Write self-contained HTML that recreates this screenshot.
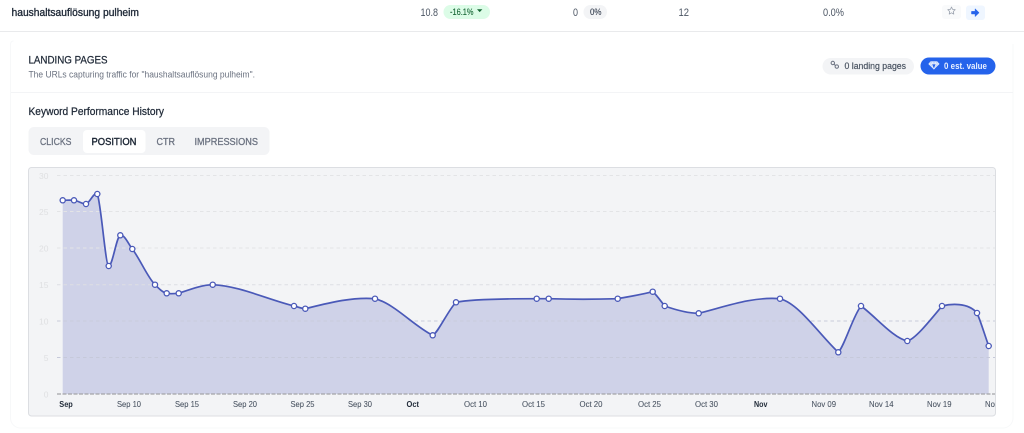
<!DOCTYPE html>
<html>
<head>
<meta charset="utf-8">
<style>
html,body{margin:0;padding:0;background:#fff;width:1024px;height:433px;overflow:hidden}
svg{display:block;filter:blur(.3px)}
text{font-family:"Liberation Sans",sans-serif}
.x{font-size:8.5px;fill:#4b5563;stroke:#4b5563;stroke-width:.08px}
.xb{font-size:8.5px;fill:#1f2937;font-weight:bold}
.y{font-size:8.5px;fill:#dfe0e2;text-anchor:end}
.t{font-size:10.5px;fill:#6b7280;stroke:#6b7280;stroke-width:.3px}
</style>
</head>
<body>
<svg width="1024" height="433" viewBox="0 0 1024 433" xmlns="http://www.w3.org/2000/svg">
<rect width="1024" height="433" fill="#fff"/>
<line x1="0" x2="1024" y1="31.5" y2="31.5" stroke="#e9eaec"/>

<text x="11.5" y="16" font-size="11" fill="#1f2937" stroke="#1f2937" stroke-width=".35" textLength="127.5" lengthAdjust="spacingAndGlyphs">haushaltsauflösung pulheim</text>
<text x="420.5" y="16" font-size="11" fill="#4b5563" textLength="17.5" lengthAdjust="spacingAndGlyphs">10.8</text>
<rect x="443.5" y="5" width="46.5" height="14" rx="7" fill="#dcfce7"/>
<text x="450" y="15.2" font-size="9" fill="#166534" stroke="#166534" stroke-width=".12" textLength="23.5" lengthAdjust="spacingAndGlyphs">-16.1%</text>
<path d="M477 9.2h5.4l-2.7 2.9z" fill="#166534"/>
<text x="573" y="16" font-size="11" fill="#4b5563" textLength="5" lengthAdjust="spacingAndGlyphs">0</text>
<rect x="583.5" y="5" width="23.5" height="14" rx="7" fill="#f3f4f6"/>
<text x="590" y="15.2" font-size="9" fill="#374151" stroke="#374151" stroke-width=".12" textLength="11.5" lengthAdjust="spacingAndGlyphs">0%</text>
<text x="678.5" y="16" font-size="11" fill="#4b5563" textLength="10.5" lengthAdjust="spacingAndGlyphs">12</text>
<text x="823" y="16" font-size="11" fill="#4b5563" textLength="21" lengthAdjust="spacingAndGlyphs">0.0%</text>

<rect x="942" y="5" width="19" height="14" rx="3" fill="#f9fafb"/>
<path d="M951.5 7l1.1 2.4 2.6.3-1.9 1.8.5 2.6-2.3-1.3-2.3 1.3.5-2.6-1.9-1.8 2.6-.3z" fill="none" stroke="#9ca3af" stroke-width=".8" stroke-linejoin="round"/>
<rect x="966" y="5.5" width="19" height="14.5" rx="3" fill="#eff6ff"/>
<path d="M971.5 11.4h3.6v-2.6l4 3.9-4 3.9v-2.6h-3.6z" fill="#2563eb" stroke="#2563eb" stroke-width=".5" stroke-linejoin="round"/>

<path d="M10.5 44a3 3 0 0 1 3-3M10.5 44V418a10 10 0 0 0 10 10H1003a10 10 0 0 0 10-10V44" fill="none" stroke="#f7f8f9"/>
<line x1="11" x2="1013" y1="92.5" y2="92.5" stroke="#f3f4f6"/>

<text x="28.5" y="63.7" font-size="11" fill="#1f2937" stroke="#1f2937" stroke-width=".25" textLength="79" lengthAdjust="spacingAndGlyphs">LANDING PAGES</text>
<text x="28.5" y="77.7" font-size="9" fill="#6b7280" textLength="226.5" lengthAdjust="spacingAndGlyphs">The URLs capturing traffic for "haushaltsauflösung pulheim".</text>

<rect x="822.5" y="58" width="91.5" height="16.5" rx="8.25" fill="#f3f4f6"/>
<g fill="none" stroke="#6b7280" stroke-width="1">
<circle cx="832.8" cy="63" r="1.7"/><circle cx="836.8" cy="66.6" r="1.7"/><path d="M834 64.2l1.6 1.4"/>
</g>
<text x="844.5" y="69.2" font-size="9.5" fill="#4b5563" stroke="#4b5563" stroke-width=".2" textLength="61.5" lengthAdjust="spacingAndGlyphs">0 landing pages</text>

<rect x="920.5" y="57.5" width="75" height="17" rx="8.5" fill="#2563eb"/>
<path d="M930.6 61.6h6.6l2 2.4-5.3 5.2-5.3-5.2zM928.6 64h10.6M931.8 64l2.1 5.2 2.1-5.2M931.8 64l1-2.4M936 64l-1-2.4" fill="#c3d6fb" stroke="#fff" stroke-width=".5" stroke-linejoin="round"/>
<text x="944" y="69.2" font-size="9.5" font-weight="bold" fill="#e8efff" textLength="43" lengthAdjust="spacingAndGlyphs">0 est. value</text>

<text x="28.5" y="115" font-size="11" fill="#1f2937" stroke="#1f2937" stroke-width=".25" textLength="135.5" lengthAdjust="spacingAndGlyphs">Keyword Performance History</text>

<rect x="28.5" y="127" width="241" height="28" rx="5.5" fill="#f3f4f6"/>
<rect x="83" y="130" width="62.5" height="23" rx="4" fill="#fff"/>
<text x="40" y="145" class="t" textLength="31.5" lengthAdjust="spacingAndGlyphs">CLICKS</text>
<text x="91.5" y="145" font-size="10.5" fill="#1f2937" stroke="#1f2937" stroke-width=".4" textLength="45" lengthAdjust="spacingAndGlyphs">POSITION</text>
<text x="156.5" y="145" class="t" textLength="18.5" lengthAdjust="spacingAndGlyphs">CTR</text>
<text x="194.5" y="145" class="t" textLength="63.5" lengthAdjust="spacingAndGlyphs">IMPRESSIONS</text>

<clipPath id="c"><rect x="29" y="168" width="966" height="248"/></clipPath>
<rect x="28.5" y="167.5" width="967" height="248.5" rx="3" fill="#f3f4f6" stroke="#dcdee2"/>

<path id="a" fill="#cfd2e8" d="M62.7 394V200.3C66.5 200.3 70.2 199.9 74 200.3C78 200.7 82 204 86 204C89.8 203 93.5 192.1 97.3 194C101.1 203.5 105.5 266 108.7 266C112.6 266 116.4 236.5 120.3 235.3C124.3 234.1 128.3 243.8 132.3 249C139.9 258.8 147.4 277.1 155 284.7C158.9 288.6 162.8 292.5 166.7 293.3C170.7 294.1 174.7 293.7 178.7 293.3C190 289.5 201.4 285 212.7 284.7C239.8 286 266.9 299.2 294 306C297.8 306.9 301.5 308.7 305.3 308.7C328.5 303 351.8 296.8 375 298.7C394.2 303.5 413.5 325.7 432.7 335.3C438 333 448.2 310 456 302.3C470 299.5 510 298.7 536.7 298.7C540.7 298.7 544.7 298.7 548.7 298.7C571.7 299.4 594.7 299.4 617.7 298.7C629.4 296.5 641 294.7 652.7 291.7C656.7 295 660.7 301 664.7 306C676 310 687.4 313.3 698.7 313.3C725.8 306.5 752 296.5 780 298.7C799.4 304 818.9 334 838.3 352.3C844.5 346 853 316 861 306C875 316 893 338 907.3 341C915 339 928 323 942 306C950 304 968 302 977 313C981 322 985 336 988.7 346V394Z"/>

<g stroke="#e3e4e6" stroke-width="1" stroke-dasharray="3.5 3">
<line x1="57" x2="995" y1="175.5" y2="175.5"/>
<line x1="57" x2="995" y1="211.5" y2="211.5"/>
<line x1="57" x2="995" y1="248" y2="248"/>
<line x1="57" x2="995" y1="284.7" y2="284.7" stroke="#dddee3"/>
<line x1="57" x2="995" y1="321" y2="321" stroke="#c9ccdb"/>
<line x1="57" x2="995" y1="357.5" y2="357.5" stroke="#c6c9da"/>
</g>
<line x1="57" x2="995" y1="394" y2="394" stroke="#a3a4a8" stroke-width="1.2" stroke-dasharray="4 1.5"/>

<path fill="none" stroke="#4a59b8" stroke-width="1.7" d="M62.7 200.3C66.5 200.3 70.2 199.9 74 200.3C78 200.7 82 204 86 204C89.8 203 93.5 192.1 97.3 194C101.1 203.5 105.5 266 108.7 266C112.6 266 116.4 236.5 120.3 235.3C124.3 234.1 128.3 243.8 132.3 249C139.9 258.8 147.4 277.1 155 284.7C158.9 288.6 162.8 292.5 166.7 293.3C170.7 294.1 174.7 293.7 178.7 293.3C190 289.5 201.4 285 212.7 284.7C239.8 286 266.9 299.2 294 306C297.8 306.9 301.5 308.7 305.3 308.7C328.5 303 351.8 296.8 375 298.7C394.2 303.5 413.5 325.7 432.7 335.3C438 333 448.2 310 456 302.3C470 299.5 510 298.7 536.7 298.7C540.7 298.7 544.7 298.7 548.7 298.7C571.7 299.4 594.7 299.4 617.7 298.7C629.4 296.5 641 294.7 652.7 291.7C656.7 295 660.7 301 664.7 306C676 310 687.4 313.3 698.7 313.3C725.8 306.5 752 296.5 780 298.7C799.4 304 818.9 334 838.3 352.3C844.5 346 853 316 861 306C875 316 893 338 907.3 341C915 339 928 323 942 306C950 304 968 302 977 313C981 322 985 336 988.7 346"/>

<g fill="#fff" stroke="#4a59b8" stroke-width="1.3">
<circle cx="62.7" cy="200.3" r="2.6"/><circle cx="74" cy="200.3" r="2.6"/><circle cx="86" cy="204" r="2.6"/><circle cx="97.3" cy="194" r="2.6"/><circle cx="108.7" cy="266" r="2.6"/><circle cx="120.3" cy="235.3" r="2.6"/><circle cx="132.3" cy="249" r="2.6"/><circle cx="155" cy="284.7" r="2.6"/><circle cx="166.7" cy="293.3" r="2.6"/><circle cx="178.7" cy="293.3" r="2.6"/><circle cx="212.7" cy="284.7" r="2.6"/><circle cx="294" cy="306" r="2.6"/><circle cx="305.3" cy="308.7" r="2.6"/><circle cx="375" cy="298.7" r="2.6"/><circle cx="432.7" cy="335.3" r="2.6"/><circle cx="456" cy="302.3" r="2.6"/><circle cx="536.7" cy="298.7" r="2.6"/><circle cx="548.7" cy="298.7" r="2.6"/><circle cx="617.7" cy="298.7" r="2.6"/><circle cx="652.7" cy="291.7" r="2.6"/><circle cx="664.7" cy="306" r="2.6"/><circle cx="698.7" cy="313.3" r="2.6"/><circle cx="780" cy="298.7" r="2.6"/><circle cx="838.3" cy="352.3" r="2.6"/><circle cx="861" cy="306" r="2.6"/><circle cx="907.3" cy="341" r="2.6"/><circle cx="942" cy="306" r="2.6"/><circle cx="977" cy="313" r="2.6"/><circle cx="988.7" cy="346" r="2.6"/>
</g>

<g>
<text class="y" x="48.5" y="179">30</text>
<text class="y" x="48.5" y="215">25</text>
<text class="y" x="48.5" y="251.5">20</text>
<text class="y" x="48.5" y="288">15</text>
<text class="y" x="48.5" y="324.5">10</text>
<text class="y" x="48.5" y="361">5</text>
<text class="y" x="48.5" y="397.5">0</text>
</g>

<g clip-path="url(#c)">
<text class="xb" x="59.3" y="407.2" textLength="13.5" lengthAdjust="spacingAndGlyphs">Sep</text>
<text class="x" x="117" y="407.2" textLength="24" lengthAdjust="spacingAndGlyphs">Sep 10</text>
<text class="x" x="175" y="407.2" textLength="24" lengthAdjust="spacingAndGlyphs">Sep 15</text>
<text class="x" x="233" y="407.2" textLength="24" lengthAdjust="spacingAndGlyphs">Sep 20</text>
<text class="x" x="290.5" y="407.2" textLength="24" lengthAdjust="spacingAndGlyphs">Sep 25</text>
<text class="x" x="348" y="407.2" textLength="24" lengthAdjust="spacingAndGlyphs">Sep 30</text>
<text class="xb" x="406.5" y="407.2" textLength="12.5" lengthAdjust="spacingAndGlyphs">Oct</text>
<text class="x" x="464" y="407.2" textLength="23" lengthAdjust="spacingAndGlyphs">Oct 10</text>
<text class="x" x="522" y="407.2" textLength="23" lengthAdjust="spacingAndGlyphs">Oct 15</text>
<text class="x" x="579.5" y="407.2" textLength="23" lengthAdjust="spacingAndGlyphs">Oct 20</text>
<text class="x" x="638" y="407.2" textLength="23" lengthAdjust="spacingAndGlyphs">Oct 25</text>
<text class="x" x="695" y="407.2" textLength="23" lengthAdjust="spacingAndGlyphs">Oct 30</text>
<text class="xb" x="754" y="407.2" textLength="13.5" lengthAdjust="spacingAndGlyphs">Nov</text>
<text class="x" x="811.5" y="407.2" textLength="24.5" lengthAdjust="spacingAndGlyphs">Nov 09</text>
<text class="x" x="869" y="407.2" textLength="24.5" lengthAdjust="spacingAndGlyphs">Nov 14</text>
<text class="x" x="927" y="407.2" textLength="24.5" lengthAdjust="spacingAndGlyphs">Nov 19</text>
<text class="x" x="985" y="407.2" textLength="24.5" lengthAdjust="spacingAndGlyphs">Nov 24</text>
</g>
</svg>
</body>
</html>
